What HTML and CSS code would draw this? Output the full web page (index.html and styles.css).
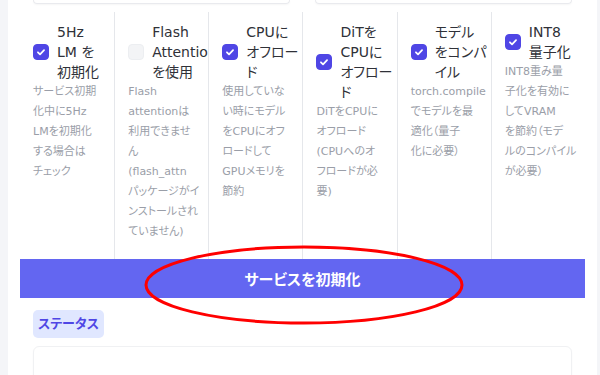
FILE: index.html
```html
<!DOCTYPE html>
<html>
	<head>
		<meta charset="utf-8">
		<title>サービス設定</title>
		<link rel="stylesheet" href="styles.css">
	</head>
	<body>
		<div class="page">
			<div class="top-cards">
				<div class="card"></div>
				<div class="card"></div>
			</div>

			<div class="options">
				<div class="opt">
					<div class="opt-head">
						<span class="check on"><svg viewBox="0 0 16 16"><path d="M4.5 8.3l2.4 2.4 4.6-4.8"/></svg></span>
						<span class="opt-label">5Hz<br>LM を<br>初期化</span>
					</div>
					<div class="opt-info">サービス初期<br>化中に5Hz<br>LMを初期化<br>する場合は<br>チェック</div>
				</div>
				<div class="opt">
					<div class="opt-head">
						<span class="check"></span>
						<span class="opt-label">Flash<br>Attention<br>を使用</span>
					</div>
					<div class="opt-info">Flash<br>attentionは<br>利用できませ<br>ん<br>(flash_attn<br>パッケージがイ<br>ンストールされ<br>ていません)</div>
				</div>
				<div class="opt">
					<div class="opt-head">
						<span class="check on"><svg viewBox="0 0 16 16"><path d="M4.5 8.3l2.4 2.4 4.6-4.8"/></svg></span>
						<span class="opt-label">CPUに<br>オフロー<br>ド</span>
					</div>
					<div class="opt-info">使用していな<br>い時にモデル<br>をCPUにオフ<br>ロードして<br>GPUメモリを<br>節約</div>
				</div>
				<div class="opt">
					<div class="opt-head">
						<span class="check on"><svg viewBox="0 0 16 16"><path d="M4.5 8.3l2.4 2.4 4.6-4.8"/></svg></span>
						<span class="opt-label">DiTを<br>CPUに<br>オフロー<br>ド</span>
					</div>
					<div class="opt-info">DiTをCPUに<br>オフロード<br>(CPUへのオ<br>フロードが必<br>要)</div>
				</div>
				<div class="opt">
					<div class="opt-head">
						<span class="check on"><svg viewBox="0 0 16 16"><path d="M4.5 8.3l2.4 2.4 4.6-4.8"/></svg></span>
						<span class="opt-label">モデル<br>をコンパ<br>イル</span>
					</div>
					<div class="opt-info">torch.compile<br>でモデルを最<br>適化（量子<br>化に必要）</div>
				</div>
				<div class="opt">
					<div class="opt-head">
						<span class="check on"><svg viewBox="0 0 16 16"><path d="M4.5 8.3l2.4 2.4 4.6-4.8"/></svg></span>
						<span class="opt-label">INT8<br>量子化</span>
					</div>
					<div class="opt-info">INT8重み量<br>子化を有効に<br>してVRAM<br>を節約（モデ<br>ルのコンパイル<br>が必要）</div>
				</div>
			</div>

			<button class="init-btn">サービスを初期化</button>

			<div class="status">
				<span class="status-label">ステータス</span>
				<div class="status-box"></div>
			</div>

			<!-- 注釈の赤い丸 -->
			<svg class="mark" viewBox="0 0 322 82"><ellipse cx="161" cy="41" rx="158" ry="38"/></svg>
		</div>
	</body>
</html>
```

FILE: styles.css
```css
html, body {margin: 0; padding: 0;}
body {
	background: #f4f5f8;
	font-family: "DejaVu Sans", "Noto Sans CJK JP", sans-serif;
	font-feature-settings: "palt";
	color: #333;
	overflow: hidden;
}
.page {
	position: relative;
	margin: 0 3px 0 8px;
	height: 375px;
	padding: 0 12px;
	background: #fff;
}
.top-cards {display: flex; gap: 25px; padding: 0 13px; height: 4px;}
.card {
	flex: 1;
	height: 3px;
	border: 1px solid #e9eaee;
	border-top: none;
	border-radius: 0 0 7px 7px;
	box-shadow: 0 1px 2px rgba(0,0,0,0.04);
}
.options {
	display: grid;
	grid-template-columns: repeat(6, 1fr);
	margin-top: 8px;
	height: 247px;
}
.opt {
	padding: 10px 13px 0;
	border-left: 1px solid #e5e7eb;
	overflow: hidden;
	min-width: 0;
}
.opt:first-child {border-left: none;}
.opt-head {display: flex; align-items: center; gap: 8px;}
.check {
	flex: none;
	width: 16px;
	height: 16px;
	box-sizing: border-box;
	border-radius: 4px;
	background: #f3f4f6;
	border: 1px solid #eceef1;
}
.check.on {background: #4f46e5; border-color: #4f46e5;}
.check svg {display: block; width: 14px; height: 14px;}
.check path {fill: none; stroke: #fff; stroke-width: 2; stroke-linecap: round; stroke-linejoin: round;}
.opt-label {font-size: 14px; line-height: 20px; white-space: nowrap; color: #2f3138;}
.opt-info {font-size: 11px; line-height: 20px; white-space: nowrap; color: #9a9ea8;}

.init-btn {
	display: block;
	width: 100%;
	height: 39px;
	border: none;
	background: #6366f1;
	color: #fff;
	font-family: inherit;
	font-feature-settings: "palt";
	font-size: 15px;
	font-weight: 700;
}
.status {padding: 12px 13px 0;}
.status-label {
	display: inline-block;
	height: 28px;
	line-height: 28px;
	padding: 0 5px;
	border-radius: 5px;
	background: #e0e7ff;
	color: #4f46e5;
	font-size: 13px;
	font-weight: 700;
}
.status-box {
	margin-top: 8px;
	height: 60px;
	border: 1px solid #f0f1f3;
	border-radius: 6px;
	box-shadow: 0 1px 2px rgba(0,0,0,0.03);
}
.mark {position: absolute; left: 135px; top: 244px; width: 322px; height: 82px; overflow: visible;}
.mark ellipse {fill: none; stroke: #f00; stroke-width: 3;}
```
